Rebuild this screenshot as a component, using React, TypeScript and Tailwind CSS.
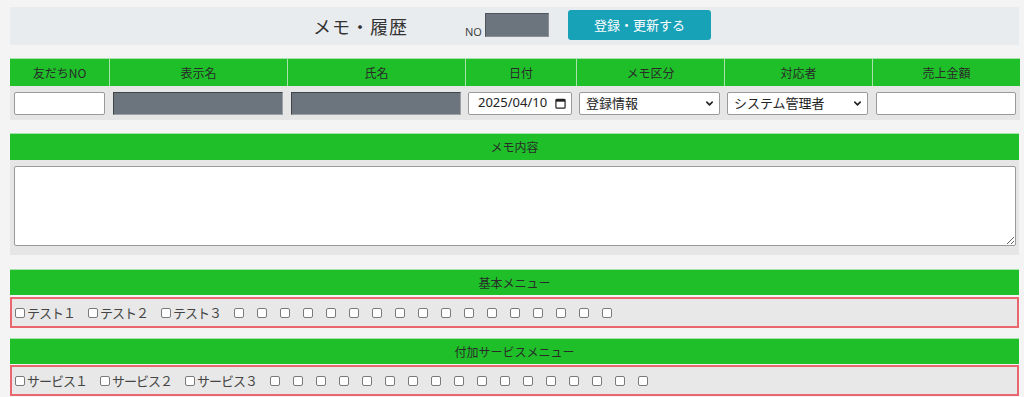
import React from "react";

const font = "font-['Noto_Sans','Noto_Sans_CJK_JP',sans-serif]";

function Check({ label }: { label?: string }) {
  return (
    <div className="flex items-center mr-[13px] shrink-0">
      <span className="w-[10px] h-[10px] border border-[#7a7a7a] rounded-[2px] bg-white shrink-0" />
      {label ? <span className="ml-[2px] text-[13px] leading-none text-[#444] tracking-[-1px]">{label}</span> : null}
    </div>
  );
}

function Chevron() {
  return (
    <svg width="9" height="9" viewBox="0 0 10 10" className="shrink-0">
      <path d="M2 3.5 L5 6.5 L8 3.5" fill="none" stroke="#222" strokeWidth="1.8" strokeLinecap="round" strokeLinejoin="round" />
    </svg>
  );
}

function Calendar() {
  return (
    <svg width="11" height="11" viewBox="0 0 12 12" className="shrink-0">
      <rect x="1" y="1.5" width="10" height="9.5" rx="1" fill="none" stroke="#222" strokeWidth="1.3" />
      <rect x="1" y="1.5" width="10" height="2.5" fill="#222" />
    </svg>
  );
}

export default function App() {
  const headers = ["友だちNO", "表示名", "氏名", "日付", "メモ区分", "対応者", "売上金額"];
  const basic = ["テスト１", "テスト２", "テスト３"];
  const service = ["サービス１", "サービス２", "サービス３"];
  const empties = Array.from({ length: 17 });

  return (
    <div className={`${font} bg-[#f4f4f4] min-h-[397px] w-[1024px] pl-[10px] pr-[5px] pt-[7px] overflow-hidden`}>
      {/* header bar */}
      <div className="h-[38px] bg-[#e9ecef] flex items-center pl-[303px]">
        <span className="text-[18px] text-[#333] font-['Noto_Sans_CJK_JP',sans-serif] tracking-[1px] leading-none">メモ・履歴</span>
        <span className="ml-[57px] mt-[10px] text-[11px] text-[#444] leading-none">NO</span>
        <div className="ml-[3px] mt-[-2px] w-[64px] h-[24px] bg-[#6c757d] border border-[#4e555b] border-r-[#8a8f94] border-b-[#8a8f94]" />
        <div className="ml-[19px] mt-[-3px] w-[143px] h-[30px] rounded-[3px] bg-[#17a2b8] flex items-center justify-center text-white text-[13px] font-['Noto_Sans_CJK_JP',sans-serif]">
          登録・更新する
        </div>
      </div>

      {/* table */}
      <div className="mt-[13px] grid grid-cols-[99px_178px_178px_111px_148px_148px_148px]">
        {headers.map((h, i) => (
          <div
            key={h}
            className={`h-[28px] bg-[#1fbf29] flex items-center justify-center text-[12px] text-[#2a2a2a] font-['Noto_Sans_CJK_JP',sans-serif] border-t border-[#a8e2aa] ${i > 0 ? "border-l" : ""}`}
          >
            {h}
          </div>
        ))}
        {/* input row */}
        <div className="h-[34px] bg-[#e6e6e6] pl-[4px] pr-[4px] flex items-center">
          <div className="w-full h-[23px] bg-white border border-[#9a9a9a] rounded-[2px]" />
        </div>
        <div className="h-[34px] bg-[#e6e6e6] pl-[4px] pr-[4px] flex items-center">
          <div className="w-full h-[23px] bg-[#6c757d] border border-[#3f4549] border-r-[#9aa0a4] border-b-[#9aa0a4]" />
        </div>
        <div className="h-[34px] bg-[#e6e6e6] pl-[4px] pr-[4px] flex items-center">
          <div className="w-full h-[23px] bg-[#6c757d] border border-[#3f4549] border-r-[#9aa0a4] border-b-[#9aa0a4]" />
        </div>
        <div className="h-[34px] bg-[#e6e6e6] pl-[3px] pr-[4px] flex items-center">
          <div className="w-full h-[23px] bg-white border border-[#9a9a9a] rounded-[2px] flex items-center justify-between pl-[9px] pr-[5px] text-[13px] text-[#222]">
            <span>2025/04/10</span>
            <Calendar />
          </div>
        </div>
        <div className="h-[34px] bg-[#e6e6e6] pl-[3px] pr-[4px] flex items-center">
          <div className="w-full h-[23px] bg-white border border-[#9a9a9a] rounded-[2px] flex items-center justify-between pl-[6px] pr-[5px] text-[13px] text-[#222] font-['Noto_Sans_CJK_JP',sans-serif]">
            <span>登録情報</span>
            <Chevron />
          </div>
        </div>
        <div className="h-[34px] bg-[#e6e6e6] pl-[3px] pr-[4px] flex items-center">
          <div className="w-full h-[23px] bg-white border border-[#9a9a9a] rounded-[2px] flex items-center justify-between pl-[6px] pr-[5px] text-[13px] text-[#222] font-['Noto_Sans_CJK_JP',sans-serif]">
            <span>システム管理者</span>
            <Chevron />
          </div>
        </div>
        <div className="h-[34px] bg-[#e6e6e6] pl-[4px] pr-[4px] flex items-center">
          <div className="w-full h-[23px] bg-white border border-[#9a9a9a] rounded-[2px]" />
        </div>
      </div>

      {/* memo */}
      <div className="mt-[13px] w-[1009px]">
        <div className="h-[27px] bg-[#1fbf29] border-t border-[#a8e2aa] flex items-center justify-center text-[12px] text-[#2a2a2a] font-['Noto_Sans_CJK_JP',sans-serif]">
          メモ内容
        </div>
        <div className="h-[95px] bg-[#e6e6e6] pt-[6px] pl-[4px] pr-[3px]">
          <textarea className="block w-full h-[80px] bg-white border border-[#9a9a9a] rounded-[2px] resize-y outline-none" />
        </div>
      </div>

      {/* basic menu */}
      <div className="mt-[14px] w-[1009px]">
        <div className="h-[26px] bg-[#1fbf29] border-t border-[#a8e2aa] flex items-center justify-center text-[12px] text-[#2a2a2a] font-['Noto_Sans_CJK_JP',sans-serif]">
          基本メニュー
        </div>
        <div className="mt-[2px] h-[31px] bg-[#e8e8e8] border-2 border-[#e9666f] flex items-center pl-[3px] font-['Noto_Sans_CJK_JP',sans-serif]">
          {basic.map((b) => (
            <Check key={b} label={b} />
          ))}
          {empties.map((_, i) => (
            <Check key={i} />
          ))}
        </div>
      </div>

      {/* service menu */}
      <div className="mt-[10px] w-[1009px]">
        <div className="h-[26px] bg-[#1fbf29] border-t border-[#a8e2aa] flex items-center justify-center text-[12px] text-[#2a2a2a] font-['Noto_Sans_CJK_JP',sans-serif]">
          付加サービスメニュー
        </div>
        <div className="mt-[1px] h-[31px] bg-[#e8e8e8] border-2 border-[#e9666f] flex items-center pl-[3px] font-['Noto_Sans_CJK_JP',sans-serif]">
          {service.map((b) => (
            <Check key={b} label={b} />
          ))}
          {empties.map((_, i) => (
            <Check key={i} />
          ))}
        </div>
      </div>
    </div>
  );
}
